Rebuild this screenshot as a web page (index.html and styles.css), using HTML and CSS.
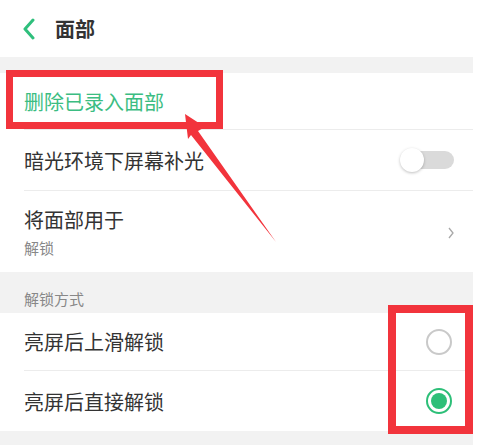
FILE: index.html
```html
<!DOCTYPE html>
<html lang="zh">
<head>
    <meta charset="UTF-8">
    <meta name="viewport" content="width=device-width, initial-scale=1.0">
    <title>面部</title>
    <link rel="stylesheet" href="styles.css">
</head>
<body>
    <div class="screen">
        <header class="topbar">
            <svg class="back" width="14" height="22" viewBox="0 0 14 22">
                <path d="M11 2 L3 11 L11 20" fill="none" stroke="#2fbf7c" stroke-width="3" stroke-linecap="round" stroke-linejoin="round"/>
            </svg>
            <h1>面部</h1>
        </header>

        <div class="band band-top"></div>

        <div class="row row-delete">
            <span class="green">删除已录入面部</span>
        </div>
        <div class="row row-light">
            <span>暗光环境下屏幕补光</span>
            <div class="switch"><div class="knob"></div></div>
        </div>
        <div class="row row-use">
            <div class="texts">
                <span>将面部用于</span>
                <span class="sub">解锁</span>
            </div>
            <svg class="more" width="6" height="12" viewBox="0 0 6 12">
                <path d="M1 1 L5 6 L1 11" fill="none" stroke="#a8a8a8" stroke-width="1.3"/>
            </svg>
        </div>

        <div class="band band-label">解锁方式</div>

        <div class="row row-radio">
            <span>亮屏后上滑解锁</span>
            <div class="radio"></div>
        </div>
        <div class="row row-radio last">
            <span>亮屏后直接解锁</span>
            <div class="radio checked"><div class="dot"></div></div>
        </div>

        <div class="band band-bottom"></div>

        <!-- anotaciones rojas sobre la captura -->
        <div class="mark mark-delete"></div>
        <div class="mark mark-radio"></div>
        <svg class="arrow" width="477" height="445" viewBox="0 0 477 445">
            <polygon points="185,114 205,127 198,131 276,242 191,135 188,139" fill="#f2343c"/>
        </svg>
    </div>
</body>
</html>
```

FILE: styles.css
```css
body {
    margin: 0;
    background: #ffffff;
    font-family: "Noto Sans CJK SC", "Noto Sans", sans-serif;
    color: #333333;
}

.screen {
    position: relative;
    width: 473px;
    height: 445px;
    overflow: hidden;
}

.topbar {
    height: 57px;
    display: flex;
    align-items: center;
    padding-left: 22px;
    gap: 19px;
}

.topbar h1 {
    margin: 0;
    font-size: 20px;
    font-weight: 700;
    color: #333333;
}

.band {
    background: #f2f2f2;
}

.band-top {
    height: 16px;
}

.band-label {
    height: 41px;
    box-sizing: border-box;
    padding: 17px 0 0 24px;
    font-size: 15px;
    line-height: 19px;
    color: #888888;
}

.band-bottom {
    height: 14px;
}

.row {
    display: flex;
    align-items: center;
    justify-content: space-between;
    margin-left: 24px;
    padding-right: 19px;
    font-size: 20px;
    border-bottom: 1px solid #ececec;
    box-sizing: border-box;
}

.row-delete { height: 57px; }
.row-light { height: 61px; }
.row-use { height: 81px; border-bottom: none; }
.row-radio { height: 58px; padding-right: 21px; }
.row-radio.last { height: 60px; border-bottom: none; }

.green {
    color: #3bbd82;
}

.texts {
    display: flex;
    flex-direction: column;
    gap: 3px;
}

.texts .sub {
    font-size: 15px;
    color: #888888;
}

.more {
    margin-top: 2px;
}

.switch {
    position: relative;
    width: 54px;
    height: 24px;
}

.switch::before {
    content: "";
    position: absolute;
    left: 10px;
    right: 0;
    top: 3px;
    height: 18px;
    border-radius: 9px;
    background: #dadada;
}

.knob {
    position: absolute;
    left: 0;
    top: 0;
    width: 24px;
    height: 24px;
    border-radius: 50%;
    background: #ffffff;
    box-shadow: 0 1px 3px rgba(0, 0, 0, 0.25);
}

.radio {
    width: 26px;
    height: 26px;
    box-sizing: border-box;
    border: 2px solid #c9c9c9;
    border-radius: 50%;
    display: flex;
    align-items: center;
    justify-content: center;
}

.radio.checked {
    border-color: #2dbf78;
}

.dot {
    width: 16px;
    height: 16px;
    border-radius: 50%;
    background: #2dbf78;
}

.mark {
    position: absolute;
    border: 7px solid #f2343c;
    box-sizing: border-box;
}

.mark-delete {
    left: 6px;
    top: 70px;
    width: 217px;
    height: 59px;
}

.mark-radio {
    left: 388px;
    top: 305px;
    width: 85px;
    height: 129px;
    border-width: 8px;
}

.arrow {
    position: absolute;
    left: 0;
    top: 0;
}
```
